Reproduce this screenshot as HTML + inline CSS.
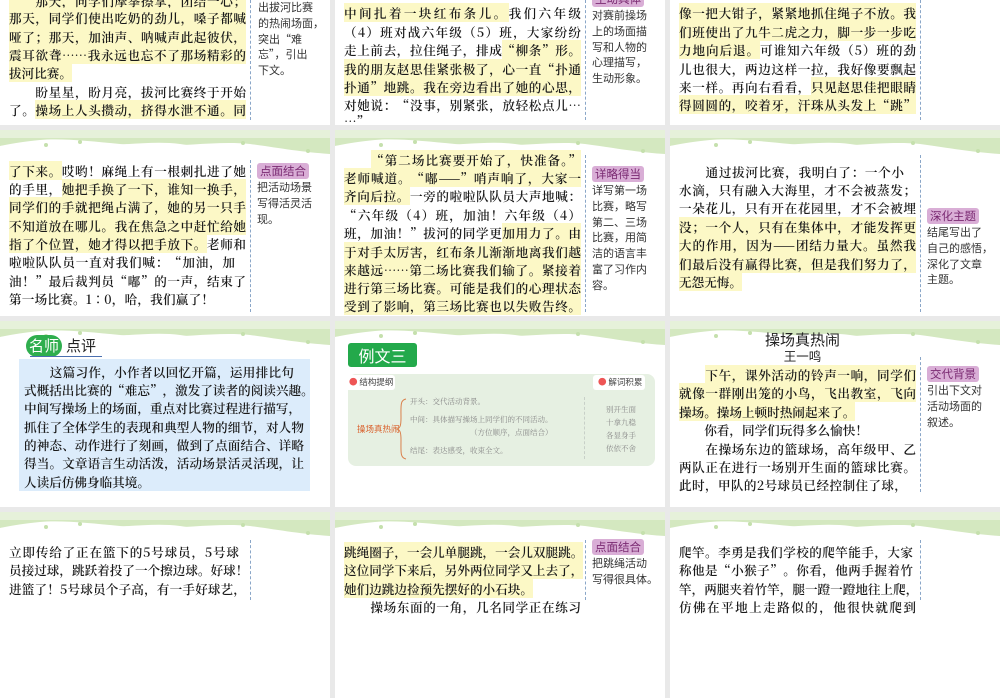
<!DOCTYPE html>
<html><head><meta charset="utf-8"><style>
*{margin:0;padding:0;box-sizing:border-box}
body{width:1000px;height:600px;background:#e9e9e9;position:relative;overflow:hidden;font-family:"Noto Serif CJK SC","Liberation Serif",serif;color:#1a1a1a}
.p{position:absolute;width:330px;height:186px;background:#fff;overflow:hidden}
.w{position:absolute;left:0;top:0;width:330px;height:26px}
.l{position:absolute;height:18px;line-height:18px;font-size:12.6px;font-weight:600;text-align:justify;text-align-last:justify;white-space:nowrap}
.h{background:#fcf8c6}
.d{position:absolute;width:0;border-left:1px dashed #8aa6c8}
.n{position:absolute;font-family:"Noto Sans CJK SC","Liberation Sans",sans-serif;font-size:11px;line-height:15.8px;color:#333;width:72px}
.t{display:inline-block;background:#d9aed6;color:#7a2a72;padding:0 3px;border-radius:3px;font-size:11.5px;line-height:16px;margin-bottom:1px}
.s{position:absolute;font-size:7.5px;line-height:10px;color:#888;white-space:nowrap}
</style></head><body>
<svg width="0" height="0" style="position:absolute"><defs><g id="wv"><rect x="0" y="0" width="330" height="8" fill="#e6f1da"/><path d="M0 8 L330 8 L330 24 C300 22 280 18 250 14 C210 10 170 20 120 14 C90 11 60 8 40 10 C20 12 10 14 0 16Z" fill="#d4e8c0"/><path d="M0 16 C30 13 60 12 90 14 C120 17 150 10 180 14 C220 20 260 22 330 25 L330 26 L0 26Z" fill="#fff"/><circle cx="46" cy="15" r="2" fill="#c5e0ad"/><circle cx="80" cy="12" r="2" fill="#c5e0ad"/><circle cx="243" cy="13" r="2" fill="#c5e0ad"/><circle cx="308" cy="21" r="2" fill="#c5e0ad"/></g></defs></svg>

<div class="p" style="left:0;top:-61px"></div>
<div class="p" style="left:335px;top:-61px"></div>
<div class="p" style="left:670px;top:-61px"></div>
<div class="p" style="left:0;top:130px"><svg class="w"><use href="#wv"/></svg></div>
<div class="p" style="left:335px;top:130px"><svg class="w"><use href="#wv"/></svg></div>
<div class="p" style="left:670px;top:130px"><svg class="w"><use href="#wv"/></svg></div>
<div class="p" style="left:0;top:321px"><svg class="w"><use href="#wv"/></svg></div>
<div class="p" style="left:335px;top:321px"><svg class="w"><use href="#wv"/></svg></div>
<div class="p" style="left:670px;top:321px"><svg class="w"><use href="#wv"/></svg></div>
<div class="p" style="left:0;top:512px"><svg class="w"><use href="#wv"/></svg></div>
<div class="p" style="left:335px;top:512px"><svg class="w"><use href="#wv"/></svg></div>
<div class="p" style="left:670px;top:512px"><svg class="w"><use href="#wv"/></svg></div>

<div class="d" style="left:250px;top:0;height:120px"></div>
<div class="d" style="left:585px;top:0;height:120px"></div>
<div class="d" style="left:920px;top:0;height:120px"></div>
<div class="d" style="left:250px;top:160px;height:152px"></div>
<div class="d" style="left:585px;top:155px;height:157px"></div>
<div class="d" style="left:920px;top:155px;height:157px"></div>
<div class="d" style="left:920px;top:357px;height:135px"></div>
<div class="d" style="left:250px;top:540px;height:60px"></div>
<div class="d" style="left:585px;top:540px;height:60px"></div>
<div class="d" style="left:920px;top:540px;height:60px"></div>

<div class="l" style="left:9px;width:237px;top:-8px"><span class="h">　　那天，同学们摩拳擦掌，团结一心；</span></div>
<div class="l" style="left:9px;width:237px;top:9px"><span class="h">那天，同学们使出吃奶的劲儿，嗓子都喊</span></div>
<div class="l" style="left:9px;width:237px;top:28px"><span class="h">哑了；那天，加油声、呐喊声此起彼伏，</span></div>
<div class="l" style="left:9px;width:237px;top:46px"><span class="h">震耳欲聋……我永远也忘不了那场精彩的</span></div>
<div class="l" style="left:9px;top:64px"><span class="h">拔河比赛。</span></div>
<div class="l" style="left:9px;width:237px;top:83px">　　盼星星，盼月亮，拔河比赛终于开始</div>
<div class="l" style="left:9px;width:237px;top:101px">了。<span class="h">操场上人头攒动，挤得水泄不通。同</span></div>
<div class="n" style="left:258px;top:0">出拔河比赛<br>的热闹场面，<br>突出“难<br>忘”，引出<br>下文。</div>

<div class="l" style="left:344px;width:237px;top:4px"><span class="h">中间扎着一块红布条儿。</span>我们六年级</div>
<div class="l" style="left:344px;width:237px;top:23px">（4）班对战六年级（5）班，大家纷纷</div>
<div class="l" style="left:344px;width:237px;top:41px">走上前去，拉住绳子，排成<span class="h">“柳条”形。</span></div>
<div class="l" style="left:344px;width:237px;top:60px"><span class="h">我的朋友赵思佳紧张极了，心一直“扑通</span></div>
<div class="l" style="left:344px;width:237px;top:78px"><span class="h">扑通”地跳。我在旁边看出了她的心思，</span></div>
<div class="l" style="left:344px;width:237px;top:96px">对她说：“没事，别紧张，放轻松点儿…</div>
<div class="l" style="left:344px;top:112px">…”</div>
<div class="n" style="left:592px;top:-9px"><span class="t">生动具体</span><br>对赛前操场<br>上的场面描<br>写和人物的<br>心理描写，<br>生动形象。</div>

<div class="l" style="left:679px;width:237px;top:4px"><span class="h">像一把大钳子，紧紧地抓住绳子不放。我</span></div>
<div class="l" style="left:679px;width:237px;top:23px"><span class="h">们班使出了九牛二虎之力，脚一步一步吃</span></div>
<div class="l" style="left:679px;width:237px;top:41px"><span class="h">力地向后退。</span>可谁知六年级（5）班的劲</div>
<div class="l" style="left:679px;width:237px;top:60px">儿也很大，两边这样一拉，我好像要飘起</div>
<div class="l" style="left:679px;width:237px;top:78px">来一样。再向右看看，<span class="h">只见赵思佳把眼睛</span></div>
<div class="l" style="left:679px;width:237px;top:96px"><span class="h">得圆圆的，咬着牙，汗珠从头发上“跳”</span></div>

<div class="l" style="left:9px;width:237px;top:162px"><span class="h">了下来。</span>哎哟！麻绳上有一根刺扎进了她</div>
<div class="l" style="left:9px;width:237px;top:180px">的手里，<span class="h">她把手换了一下，谁知一换手，</span></div>
<div class="l" style="left:9px;width:237px;top:198px"><span class="h">同学们的手就把绳占满了，她的另一只手</span></div>
<div class="l" style="left:9px;width:237px;top:217px"><span class="h">不知道放在哪儿。我在焦急之中赶忙给她</span></div>
<div class="l" style="left:9px;width:237px;top:235px"><span class="h">指了个位置，她才得以把手放下。</span>老师和</div>
<div class="l" style="left:9px;width:226px;top:253px">啦啦队队员一直对我们喊：“加油，加</div>
<div class="l" style="left:9px;width:237px;top:272px">油！”最后裁判员“嘟”的一声，结束了</div>
<div class="l" style="left:9px;width:205px;top:290px">第一场比赛。1∶0，哈，我们赢了！</div>
<div class="n" style="left:257px;top:163px"><span class="t">点面结合</span><br>把活动场景<br>写得活灵活<br>现。</div>

<div class="l" style="left:344px;width:237px;top:151px">　　<span class="h">“第二场比赛要开始了，快准备。”</span></div>
<div class="l" style="left:344px;width:237px;top:169px"><span class="h">老师喊道。“嘟——”哨声响了，大家一</span></div>
<div class="l" style="left:344px;width:237px;top:187px"><span class="h">齐向后拉。</span>一旁的啦啦队队员大声地喊：</div>
<div class="l" style="left:344px;width:237px;top:206px">“六年级（4）班，加油！六年级（4）</div>
<div class="l" style="left:344px;width:237px;top:224px">班，加油！”拔河的同学更<span class="h">加用力了。由</span></div>
<div class="l" style="left:344px;width:237px;top:243px"><span class="h">于对手太厉害，红布条儿渐渐地离我们越</span></div>
<div class="l" style="left:344px;width:237px;top:261px"><span class="h">来越远……第二场比赛我们输了。紧接着</span></div>
<div class="l" style="left:344px;width:237px;top:279px"><span class="h">进行第三场比赛。可能是我们的心理状态</span></div>
<div class="l" style="left:344px;width:237px;top:297px"><span class="h">受到了影响，第三场比赛也以失败告终。</span></div>
<div class="n" style="left:592px;top:166px"><span class="t">详略得当</span><br>详写第一场<br>比赛，略写<br>第二、三场<br>比赛，用简<br>洁的语言丰<br>富了习作内<br>容。</div>

<div class="l" style="left:679px;width:225px;top:163px">　　通过拔河比赛，我明白了：一个小</div>
<div class="l" style="left:679px;width:237px;top:181px">水滴，只有融入大海里，才不会被蒸发；</div>
<div class="l" style="left:679px;width:237px;top:199px">一朵花儿，只有开在花园里，才不会被埋</div>
<div class="l" style="left:679px;width:237px;top:218px"><span class="h">没；一个人，只有在集体中，才能发挥更</span></div>
<div class="l" style="left:679px;width:237px;top:236px"><span class="h">大的作用，因为——团结力量大。虽然我</span></div>
<div class="l" style="left:679px;width:237px;top:255px"><span class="h">们最后没有赢得比赛，但是我们努力了，</span></div>
<div class="l" style="left:679px;top:273px"><span class="h">无怨无悔。</span></div>
<div class="n" style="left:927px;top:208px"><span class="t">深化主题</span><br>结尾写出了<br>自己的感悟，<br>深化了文章<br>主题。</div>

<div style="position:absolute;left:26px;top:335px;width:36px;height:22px;border-radius:11px;background:#2fae4e;color:#fff;font-family:'Noto Sans CJK SC',sans-serif;font-size:15px;line-height:22px;text-align:center">名师</div>
<div style="position:absolute;left:66px;top:335px;font-family:'Noto Sans CJK SC',sans-serif;font-size:15px;line-height:22px;color:#222">点评</div>
<div style="position:absolute;left:30px;top:356px;width:72px;height:1px;background:#4a6fb0"></div>
<div style="position:absolute;left:19px;top:359px;width:291px;height:132px;background:#dcecfb"></div>
<div class="l" style="left:24px;width:270px;top:363px">　　这篇习作，小作者以回忆开篇，运用排比句</div>
<div class="l" style="left:24px;width:286px;top:381px">式概括出比赛的“难忘”，激发了读者的阅读兴趣。</div>
<div class="l" style="left:24px;width:274px;top:399px">中间写操场上的场面，重点对比赛过程进行描写，</div>
<div class="l" style="left:24px;width:280px;top:418px">抓住了全体学生的表现和典型人物的细节，对人物</div>
<div class="l" style="left:24px;width:280px;top:436px">的神态、动作进行了刻画，做到了点面结合、详略</div>
<div class="l" style="left:24px;width:280px;top:454px">得当。文章语言生动活泼，活动场景活灵活现，让</div>
<div class="l" style="left:24px;top:473px">人读后仿佛身临其境。</div>

<div style="position:absolute;left:348px;top:343px;width:69px;height:24px;border-radius:3px;background:#23a94b;color:#fff;font-family:'Noto Sans CJK SC',sans-serif;font-size:16px;line-height:24px;text-align:center">例文三</div>
<div style="position:absolute;left:348px;top:374px;width:307px;height:92px;border-radius:8px;background:#e6f0e2"></div>
<div style="position:absolute;left:345px;top:375px;width:50px;height:15px;background:#fff;border-radius:3px;font-family:'Noto Sans CJK SC',sans-serif;font-size:8.5px;line-height:15px;color:#444;padding-left:4px"><span style="color:#e55">●</span> 结构提纲</div>
<div style="position:absolute;left:593px;top:375px;width:52px;height:15px;background:#fff;border-radius:3px;font-family:'Noto Sans CJK SC',sans-serif;font-size:8.5px;line-height:15px;color:#444;padding-left:5px"><span style="color:#e55">●</span> 解词积累</div>
<div style="position:absolute;left:357px;top:423px;font-size:8.5px;color:#d9602c;font-family:'Noto Sans CJK SC',sans-serif">操场真热闹</div>
<svg style="position:absolute;left:396px;top:398px" width="12" height="62"><path d="M10 1 C4 2 5 8 5 20 C5 28 4 30 1 31 C4 32 5 34 5 42 C5 54 4 60 10 61" fill="none" stroke="#d9804c" stroke-width="1"/></svg>
<div class="s" style="left:410px;top:397px">开头：交代活动背景。</div>
<div class="s" style="left:410px;top:415px">中间：具体描写操场上同学们的不同活动。</div>
<div class="s" style="left:470px;top:428px">（方位顺序，点面结合）</div>
<div class="s" style="left:410px;top:446px">结尾：表达感受，收束全文。</div>
<div class="d" style="left:584px;top:397px;height:62px;border-color:#c8d0c8"></div>
<div class="s" style="left:606px;top:403px;line-height:13px">别开生面<br>十拿九稳<br>各显身手<br>依依不舍</div>

<div style="position:absolute;left:700px;width:205px;top:331px;text-align:center;font-family:'Noto Sans CJK SC',sans-serif;font-size:15px;line-height:18px;color:#222">操场真热闹</div>
<div style="position:absolute;left:700px;width:205px;top:348px;text-align:center;font-family:'Noto Sans CJK SC',sans-serif;font-size:12.5px;line-height:16px;color:#222">王一鸣</div>
<div class="l" style="left:679px;width:237px;top:366px">　　<span class="h">下午，课外活动的铃声一响，同学们</span></div>
<div class="l" style="left:679px;width:237px;top:384px"><span class="h">就像一群刚出笼的小鸟，飞出教室，飞向</span></div>
<div class="l" style="left:679px;top:403px"><span class="h">操场。操场上顿时热闹起来了。</span></div>
<div class="l" style="left:679px;top:421px">　　你看，同学们玩得多么愉快！</div>
<div class="l" style="left:679px;width:237px;top:440px">　　在操场东边的篮球场，高年级甲、乙</div>
<div class="l" style="left:679px;width:237px;top:458px">两队正在进行一场别开生面的篮球比赛。</div>
<div class="l" style="left:679px;width:228px;top:476px">此时，甲队的2号球员已经控制住了球，</div>
<div class="n" style="left:927px;top:366px"><span class="t">交代背景</span><br>引出下文对<br>活动场面的<br>叙述。</div>

<div class="l" style="left:9px;width:230px;top:543px">立即传给了正在篮下的5号球员，5号球</div>
<div class="l" style="left:9px;width:237px;top:561px">员接过球，跳跃着投了一个擦边球。好球！</div>
<div class="l" style="left:9px;width:237px;top:580px">进篮了！5号球员个子高，有一手好球艺，</div>

<div class="l" style="left:344px;width:237px;top:543px"><span class="h">跳绳圈子，一会儿单腿跳，一会儿双腿跳。</span></div>
<div class="l" style="left:344px;width:237px;top:561px"><span class="h">这位同学下来后，另外两位同学又上去了，</span></div>
<div class="l" style="left:344px;top:580px"><span class="h">她们边跳边捡预先摆好的小石块。</span></div>
<div class="l" style="left:344px;width:237px;top:598px">　　操场东面的一角，几名同学正在练习</div>
<div class="n" style="left:592px;top:539px"><span class="t">点面结合</span><br>把跳绳活动<br>写得很具体。</div>

<div class="l" style="left:679px;width:234px;top:543px">爬竿。李勇是我们学校的爬竿能手，大家</div>
<div class="l" style="left:679px;width:234px;top:561px">称他是“小猴子”。你看，他两手握着竹</div>
<div class="l" style="left:679px;width:237px;top:580px">竿，两腿夹着竹竿，腿一蹬一蹬地往上爬，</div>
<div class="l" style="left:679px;width:237px;top:598px">仿佛在平地上走路似的，他很快就爬到</div>
</body></html>
